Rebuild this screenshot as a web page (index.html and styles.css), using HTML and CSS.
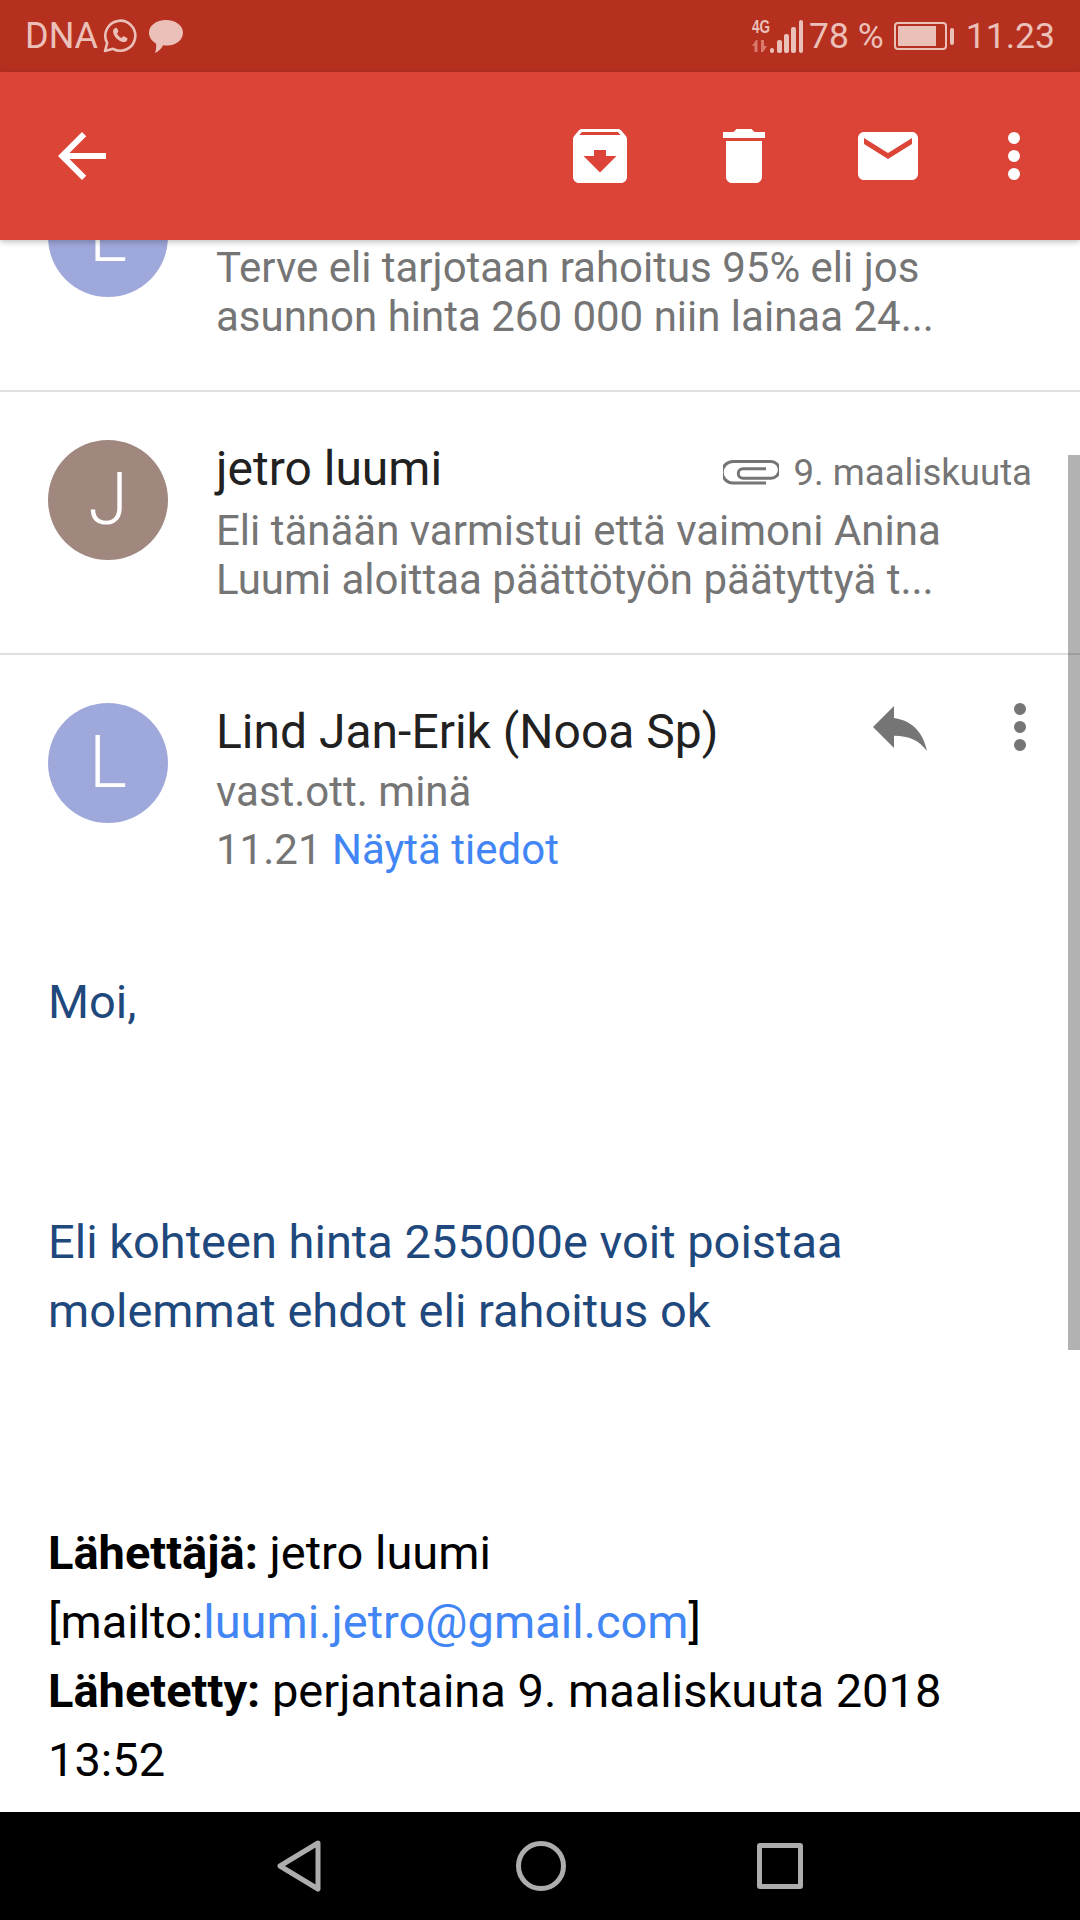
FILE: index.html
```html
<!DOCTYPE html>
<html lang="fi">
<head>
    <meta charset="UTF-8">
    <title>Gmail</title>
    <link rel="stylesheet" href="styles.css">
</head>
<body>
<div class="phone">

    <div class="statusbar">
        <div class="status-left">
            <span class="carrier">DNA</span>
            <svg class="wa" width="34" height="34" viewBox="0 0 34 34">
                <path d="M2 32l2.200-8A15 15 0 1 1 10 29.800z" fill="none" stroke="#eac0b9" stroke-width="2.600" stroke-linejoin="round"/>
                <path d="M11.500 9.500c1-1 2.200-1 2.700 0l1 2.300c.3.700 0 1.200-.4 1.700l-.8.900c1 2 2.700 3.600 4.700 4.500l1-1.100c.5-.5 1-.6 1.600-.3l2.400 1.200c.8.400.9 1.100.6 2-.6 1.700-2.500 2.600-4.300 2.200-5-1.100-9-5.200-9.900-10-.2-1.300.3-2.500 1.400-3.400z" fill="#eac0b9"/>
            </svg>
            <svg class="bubble" width="34" height="33" viewBox="0 0 34 33">
                <path d="M17 0c9.500 0 17 5.500 17 12.500 0 7.500-7 13-15.500 13-1.500 0-3 0-4.500-.3C12.500 28.500 9 32 6 33c1-2.500 1.500-6 1-9.500C2.500 21 0 17 0 12.500 0 5.500 7.500 0 17 0z" fill="#eac0b9"/>
            </svg>
        </div>
        <div class="status-right">
            <div class="network">
                <span class="net-type">4G</span>
                <svg width="16" height="12" viewBox="0 0 16 12">
                    <path d="M4 0L0 6h2.500v6h3V0zM9 0h3v6h3l-4 6H9z" fill="#d9796c"/>
                </svg>
            </div>
            <div class="signal">
                <span class="bar bar-1"></span>
                <span class="bar bar-2"></span>
                <span class="bar bar-3"></span>
                <span class="bar bar-4"></span>
                <span class="bar bar-5"></span>
            </div>
            <span class="battery-text">78 %</span>
            <div class="battery">
                <div class="battery-body"><div class="battery-fill"></div></div>
                <div class="battery-nub"></div>
            </div>
            <span class="clock">11.23</span>
        </div>
    </div>

    <div class="toolbar">
        <svg class="icon" viewBox="0 0 24 24"><path d="M20 11H7.830l5.590-5.590L12 4l-8 8 8 8 1.410-1.410L7.830 13H20v-2z"/></svg>
        <div class="actions">
            <svg class="icon" viewBox="0 0 24 24"><path d="M20.540 5.230l-1.390-1.680C18.880 3.210 18.470 3 18 3H6c-.47 0-.88.21-1.160.55L3.460 5.230C3.170 5.570 3 6.020 3 6.500V19c0 1.100.9 2 2 2h14c1.100 0 2-.9 2-2V6.500c0-.48-.17-.93-.46-1.270zM12 17.500L6.500 12H10v-2h4v2h3.500L12 17.500zM5.120 5l.81-1h12l.94 1H5.120z"/></svg>
            <svg class="icon" viewBox="0 0 24 24"><path d="M6 19c0 1.100.9 2 2 2h8c1.100 0 2-.9 2-2V7H6v12zM19 4h-3.500l-1-1h-5l-1 1H5v2h14V4z"/></svg>
            <svg class="icon" viewBox="0 0 24 24"><path d="M20 4H4c-1.100 0-1.990.9-1.990 2L2 18c0 1.100.9 2 2 2h16c1.100 0 2-.9 2-2V6c0-1.100-.9-2-2-2zm0 4l-8 5-8-5V6l8 5 8-5v2z"/></svg>
            <svg class="icon icon-more" viewBox="0 0 24 24"><circle cx="12" cy="6" r="2"/><circle cx="12" cy="12" r="2"/><circle cx="12" cy="18" r="2"/></svg>
        </div>
    </div>

    <div class="content">
        <div class="thread">
            <div class="row row-first">
                <div class="avatar avatar-l">L</div>
                <div class="row-text">
                    <div class="preview">Terve eli tarjotaan rahoitus 95% eli jos</div>
                    <div class="preview">asunnon hinta 260 000 niin lainaa 24...</div>
                </div>
            </div>

            <div class="row">
                <div class="avatar avatar-j">J</div>
                <div class="row-text">
                    <div class="row-head">
                        <span class="sender">jetro luumi</span>
                        <div class="row-meta">
                            <svg class="clip" width="56" height="25" viewBox="0 0 56 25"><path d="M43 23H10A10.750 10.750 0 0 1 10 1.500H48A8.350 8.350 0 0 1 48 18.200H20A4.700 4.700 0 0 1 20 8.800H43"/></svg>
                            <span class="date">9. maaliskuuta</span>
                        </div>
                    </div>
                    <div class="preview">Eli tänään varmistui että vaimoni Anina</div>
                    <div class="preview">Luumi aloittaa päättötyön päätyttyä t...</div>
                </div>
            </div>

            <div class="message-head">
                <div class="avatar avatar-l">L</div>
                <div class="row-text row-text-open">
                    <div class="sender sender-open">Lind Jan-Erik (Nooa Sp)</div>
                    <div class="recipient">vast.ott. minä</div>
                    <div class="recipient">11.21 <a class="link">Näytä tiedot</a></div>
                </div>
                <div class="message-actions">
                    <svg class="reply" viewBox="0 0 24 24"><path d="M10 9V5l-7 7 7 7v-4.100c5 0 8.500 1.600 11 5.100-1-5-4-10-11-11z"/></svg>
                    <svg class="reply" viewBox="0 0 24 24"><circle cx="12" cy="6" r="2"/><circle cx="12" cy="12" r="2"/><circle cx="12" cy="18" r="2"/></svg>
                </div>
            </div>

            <div class="message-body">
                <p class="blue greeting">Moi,</p>
                <p class="blue">Eli kohteen hinta 255000e voit poistaa molemmat ehdot eli rahoitus ok</p>
                <p><b>Lähettäjä:</b> jetro luumi<br>[mailto:<a class="link">luumi.jetro@gmail.com</a>]<br><b>Lähetetty:</b> perjantaina 9. maaliskuuta 2018 13:52</p>
            </div>
        </div>
        <div class="scrollbar"></div>
    </div>

    <div class="navbar">
        <svg width="48" height="54" viewBox="0 0 48 54"><path d="M42 4L4 27l38 23z" fill="none" stroke="#adadad" stroke-width="5" stroke-linejoin="round"/></svg>
        <div class="nav-circle"></div>
        <div class="nav-square"></div>
    </div>

</div>
</body>
</html>
```

FILE: styles.css
```css
* {
    box-sizing: border-box;
}

body {
    margin: 0;
    font-family: Roboto, "Liberation Sans", sans-serif;
    background-color: #ffffff;
}

.phone {
    width: 1080px;
    height: 1920px;
    display: flex;
    flex-direction: column;
    overflow: hidden;
}

/* status bar */
.statusbar {
    height: 72px;
    background-color: #b63020;
    color: #eac0b9;
    display: flex;
    justify-content: space-between;
    align-items: center;
    padding: 0 25px 0 25px;
    flex-shrink: 0;
}

.status-left,
.status-right {
    display: flex;
    align-items: center;
}

.carrier {
    font-size: 36px;
    margin-right: 5px;
}

.wa {
    margin-right: 12px;
}

.network {
    width: 18px;
    display: flex;
    flex-direction: column;
    gap: 6px;
}

.net-type {
    font-family: "Liberation Sans", sans-serif;
    font-size: 18px;
    font-weight: bold;
    line-height: 14px;
    display: inline-block;
    transform: scaleX(0.75);
    transform-origin: left center;
}

.signal {
    display: flex;
    align-items: flex-end;
    gap: 2.700px;
    height: 33px;
    margin-right: 6px;
}

.bar {
    width: 4.500px;
    background-color: #eac0b9;
    border-radius: 2px;
}

.bar-1 { height: 5px; }
.bar-2 { height: 13px; }
.bar-3 { height: 19px; }
.bar-4 { height: 26px; }
.bar-5 { height: 33px; }

.battery-text {
    font-size: 35.500px;
    margin-right: 10px;
}

.battery {
    display: flex;
    align-items: center;
    gap: 3px;
    margin-right: 12px;
}

.battery-body {
    width: 53px;
    height: 28px;
    border: 2px solid #eac0b9;
    border-radius: 4px;
    padding: 2px;
}

.battery-fill {
    width: 38px;
    height: 100%;
    background-color: #eac0b9;
}

.battery-nub {
    width: 4px;
    height: 17px;
    background-color: #eac0b9;
    border-radius: 2px;
}

.clock {
    font-size: 35.500px;
}

/* toolbar */
.toolbar {
    height: 168px;
    background-color: #dc4437;
    display: flex;
    justify-content: space-between;
    align-items: center;
    padding: 0 30px 0 46px;
    flex-shrink: 0;
    position: relative;
    z-index: 2;
    box-shadow: 0 2px 6px rgba(0, 0, 0, 0.25);
}

.actions {
    display: flex;
    gap: 72px;
}

.icon {
    width: 72px;
    height: 72px;
    fill: #ffffff;
    display: block;
}

.icon-more {
    margin-left: -18px;
}

/* list */
.content {
    flex: 1;
    overflow: hidden;
    position: relative;
    background-color: #ffffff;
}

.thread {
    margin-top: -87px;
}

.row {
    height: 263px;
    padding: 48px 48px 0 48px;
    display: flex;
    border-bottom: 2px solid #e0e0e0;
}

.row-first {
    height: 239px;
    padding-top: 24px;
}

.avatar {
    width: 120px;
    height: 120px;
    border-radius: 50%;
    color: #ffffff;
    font-size: 72px;
    font-weight: 300;
    line-height: 120px;
    text-align: center;
    flex-shrink: 0;
}

.avatar-l {
    background-color: #9fa8da;
}

.avatar-j {
    background-color: #a1887f;
}

.row-text {
    margin-left: 48px;
    flex: 1;
    min-width: 0;
}

.row-first .row-text {
    padding-top: 66px;
}

.row-text-open {
    padding-top: 1px;
}

.row-head {
    display: flex;
    justify-content: space-between;
    align-items: center;
    height: 56px;
    margin-bottom: 10px;
}

.row-meta {
    display: flex;
    align-items: center;
    gap: 14px;
    padding-top: 8px;
}

.clip {
    fill: none;
    stroke: #757575;
    stroke-width: 3;
}

.date {
    font-size: 36.600px;
    color: #757575;
}

.sender {
    font-size: 48px;
    color: #212121;
}

.preview {
    font-size: 42px;
    line-height: 49px;
    color: #757575;
}

/* open message */
.message-head {
    height: 312px;
    padding: 48px 48px 0 48px;
    display: flex;
}

.sender-open {
    line-height: 56px;
    margin-bottom: 3px;
}

.recipient {
    font-size: 42px;
    line-height: 58px;
    color: #757575;
}

.link {
    color: #4285f4;
}

.message-actions {
    display: flex;
    gap: 48px;
    margin-top: -12px;
    margin-right: -24px;
}

.reply {
    width: 72px;
    height: 72px;
    fill: #757575;
}

.message-body {
    padding: 0 48px;
    font-size: 47px;
    line-height: 69px;
    color: #000000;
}

.message-body p {
    margin: 0 0 173px 0;
}

.message-body .greeting {
    margin-bottom: 171px;
}

.blue {
    color: #1f497d;
}

.scrollbar {
    position: absolute;
    top: 215px;
    right: 0;
    width: 12px;
    height: 895px;
    background-color: rgba(0, 0, 0, 0.3);
}

/* navigation */
.navbar {
    height: 108px;
    background-color: #000000;
    display: flex;
    align-items: center;
    flex-shrink: 0;
    padding: 0 277px 0 276px;
    justify-content: space-between;
}

.nav-circle {
    width: 50px;
    height: 50px;
    border: 5px solid #adadad;
    border-radius: 50%;
}

.nav-square {
    width: 46px;
    height: 46px;
    border: 5px solid #adadad;
    border-radius: 3px;
}
```
